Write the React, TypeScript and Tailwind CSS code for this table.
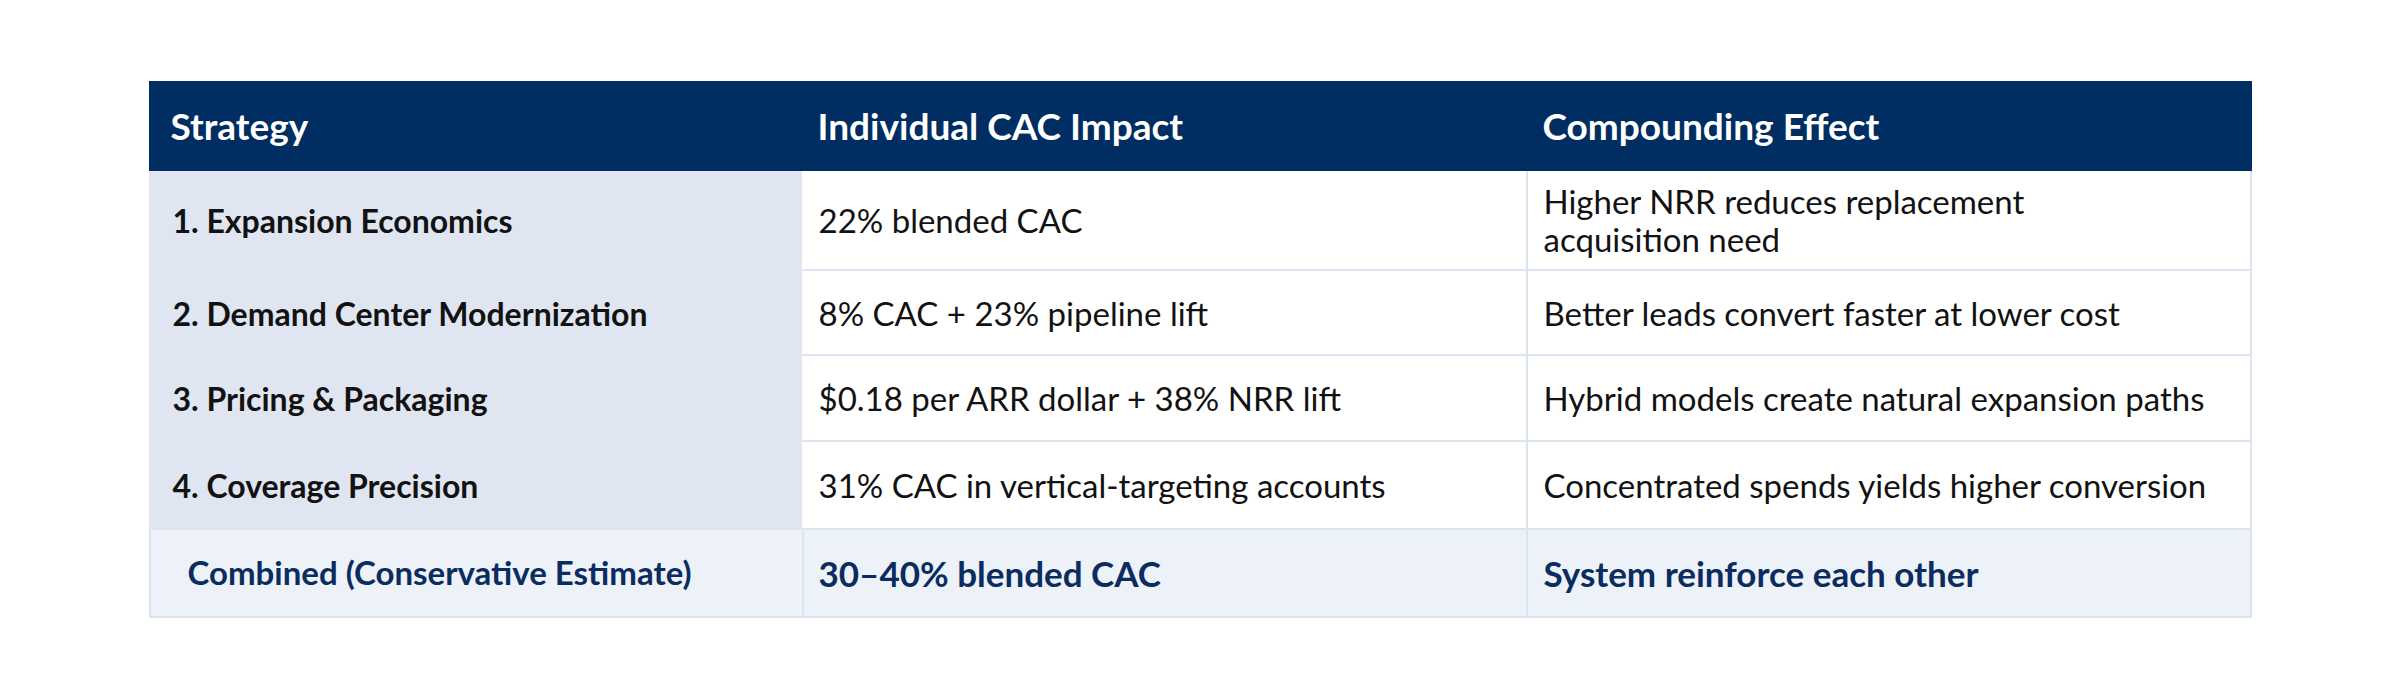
import React from "react";

const body = "text-[33px] leading-[38px] text-[#121212]";
const lead = "text-[32px] leading-[38px] font-bold text-[#121212]";
const head = "flex h-[90px] items-center bg-[#002d62] text-[37px] font-bold text-white";
const tot = "flex h-[88px] items-center border-b-2 border-l-2 border-[#dbe4f0] bg-[#edf1f8] font-bold text-[#0b2c5f]";

export default function App() {
  return (
    <div className="min-h-[700px] w-[2400px] bg-white pt-[81px]" style={{ fontFamily: "Lato, 'Liberation Sans', sans-serif" }}>
      <div className="mx-auto w-[2103px]">
        <div className="grid grid-cols-[653px_724px_726px]">
          {/* header */}
          <div className={`${head} pl-[22px]`}>Strategy</div>
          <div className={`${head} pl-[16px]`}>Individual CAC Impact</div>
          <div className={`${head} pl-[17px]`}>Compounding Effect</div>

          {/* row 1 */}
          <div className={`flex h-[100px] items-center bg-[#dfe6f1] pl-[24px] ${lead}`}>1. Expansion Economics</div>
          <div className={`flex h-[100px] items-center border-b-2 border-[#dbe4f0] pl-[17px] ${body}`}>22% blended CAC</div>
          <div className={`flex h-[100px] items-center border-b-2 border-l-2 border-r-2 border-[#dbe4f0] pl-[16px] ${body}`}>
            <span>
              Higher NRR reduces replacement
              <br />
              acquisition need
            </span>
          </div>

          {/* row 2 */}
          <div className={`flex h-[85px] items-center bg-[#dfe6f1] pl-[24px] ${lead}`}>2. Demand Center Modernization</div>
          <div className={`flex h-[85px] items-center border-b-2 border-[#dbe4f0] pl-[17px] ${body}`}>8% CAC + 23% pipeline lift</div>
          <div className={`flex h-[85px] items-center border-b-2 border-l-2 border-r-2 border-[#dbe4f0] pl-[16px] ${body}`}>Better leads convert faster at lower cost</div>

          {/* row 3 */}
          <div className={`flex h-[86px] items-center bg-[#dfe6f1] pl-[24px] ${lead}`}>3. Pricing &amp; Packaging</div>
          <div className={`flex h-[86px] items-center border-b-2 border-[#dbe4f0] pl-[17px] ${body}`}>$0.18 per ARR dollar + 38% NRR lift</div>
          <div className={`flex h-[86px] items-center border-b-2 border-l-2 border-r-2 border-[#dbe4f0] pl-[16px] ${body}`}>Hybrid models create natural expansion paths</div>

          {/* row 4 */}
          <div className={`flex h-[88px] items-center bg-[#dfe6f1] pl-[24px] ${lead}`}>4. Coverage Precision</div>
          <div className={`flex h-[88px] items-center border-b-2 border-[#dbe4f0] pl-[17px] ${body}`}>31% CAC in vertical-targeting accounts</div>
          <div className={`flex h-[88px] items-center border-b-2 border-l-2 border-r-2 border-[#dbe4f0] pl-[16px] ${body}`}>Concentrated spends yields higher conversion</div>

          {/* combined */}
          <div className={`${tot} pl-[37px] text-[33px]`}>Combined (Conservative Estimate)</div>
          <div className={`${tot} pl-[15px] text-[35px]`}>30–40% blended CAC</div>
          <div className={`${tot} border-r-2 pl-[16px] text-[35px]`}>System reinforce each other</div>
        </div>
      </div>
    </div>
  );
}
